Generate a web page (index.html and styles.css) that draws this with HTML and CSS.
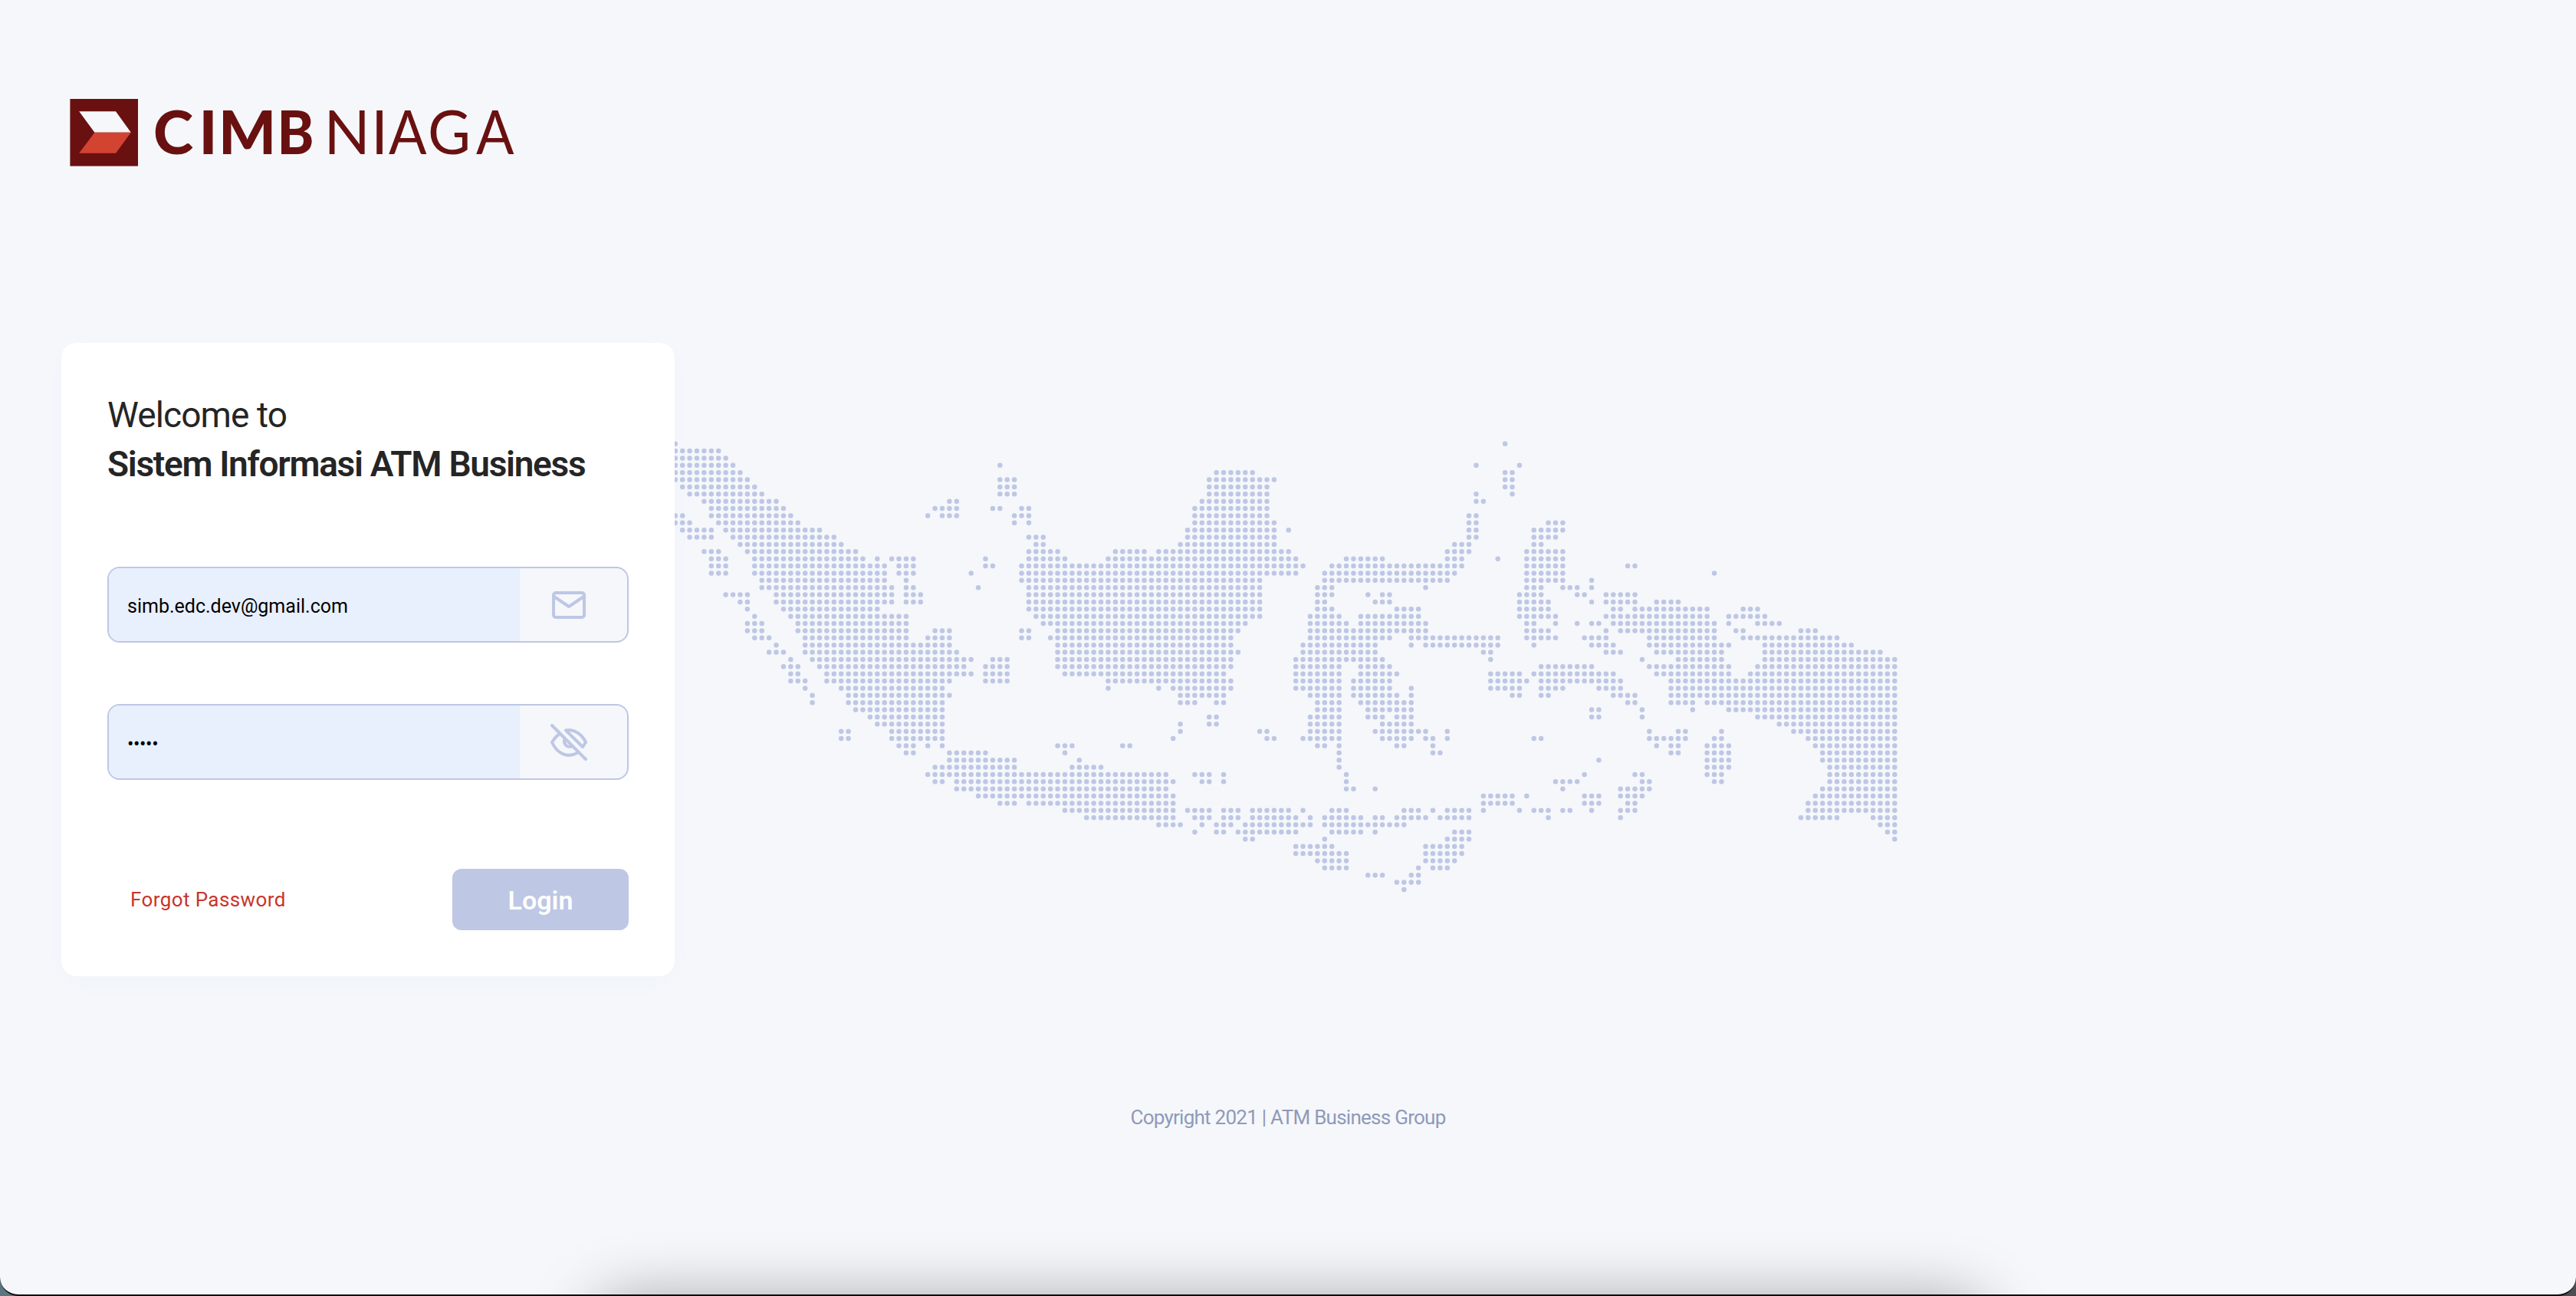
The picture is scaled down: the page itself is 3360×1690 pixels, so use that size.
FILE: index.html
```html
<!DOCTYPE html>
<html lang="en">
<head>
<meta charset="utf-8">
<title>Sistem Informasi ATM Business</title>
<link rel="stylesheet" href="styles.css">
</head>
<body>
<div class="page">
  <header class="header">
    <svg class="logo" viewBox="0 0 600 88" role="img" aria-label="CIMB Niaga">
      <rect class="logo-box" x="0.4" y="0" width="88.6" height="87.6"/>
      <path class="logo-top" d="M12.2 16.3H60L79.8 43.7H32.4Z"/>
      <path class="logo-bottom" d="M32.4 43.7H79.8L60 70.8H12.2Z"/>
      <text class="logo-bold" x="109 168.500 194" y="72.3">CIM</text>
      <text class="logo-bold" x="270.500" y="72.3" textLength="48" lengthAdjust="spacingAndGlyphs">B</text>
      <text class="logo-light" x="331.500 393" y="72.3">NI</text>
      <text class="logo-light" x="416" y="72.3" textLength="49.500" lengthAdjust="spacingAndGlyphs">A</text>
      <text class="logo-light" x="467" y="72.3" textLength="56" lengthAdjust="spacingAndGlyphs">G</text>
      <text class="logo-light" x="530" y="72.3" textLength="49.500" lengthAdjust="spacingAndGlyphs">A</text>
    </svg>
  </header>

  <main class="main">
    <form class="card">
      <h1 class="title"><span class="title-light">Welcome to</span><span class="title-bold">Sistem Informasi ATM Business</span></h1>
      <div class="field">
        <div class="field-value">simb.edc.dev@gmail.com</div>
        <div class="field-icon">
          <svg width="48" height="48" viewBox="0 0 48 48"><rect x="4" y="8" width="40" height="32" rx="3"/><path d="M4 12.5L24 26L44 12.5"/></svg>
        </div>
      </div>
      <div class="field">
        <div class="field-value field-secret">•••••</div>
        <div class="field-icon">
          <svg width="48" height="48" viewBox="0 0 48 48"><path d="M2 2L46 46"/><path d="M20 8.3C31 6.300 41.500 13.500 46 24L42 30Z"/><path d="M12 13C7.500 16 4 20.500 2 24C9 39.500 23 45 35.500 37.500"/><path d="M18.500 20C16.500 25 20.500 31 27.500 29.500"/></svg>
        </div>
      </div>
      <div class="actions">
        <a class="forgot">Forgot Password</a>
        <button class="login" type="button">Login</button>
      </div>
    </form>
    <svg class="map" viewBox="-0.08 -0.5 170 64" preserveAspectRatio="none" aria-hidden="true"><path id="dots"/></svg>
  </main>

  <footer class="footer">Copyright 2021 | ATM Business Group</footer>
  <div class="dock-shadow"></div>
</div>
<script src="map.js"></script>
</body>
</html>
```
FILE: map.js
```js
// Each line is one row of the dot grid: columns or column ranges that hold a dot.
const rows = `0 115
0-6
0-7
0-8 45 111 117
0-9 75-80 115-116
0-10 45-47 74-83 115-116
1-11 45-47 74-82 115-116
2-12 45-47 74-82 111 116
4-14 38-39 73-82 111-112
5-15 36-39 44-45 48-49 72-82
0-1 5-16 35 37-39 47-49 72-82 110-111
0-2 6-17 47 49 72-83 110-111 121-123
1-5 7-20 71-83 85 110-111 119-123
2-5 8-22 49-51 71-83 110-111 119-122
9-23 50-51 70-83 108-110 119-120
4-6 10-25 49-53 61-65 67-85 107-110 118-123
5-7 11-26 28 30-33 43 49-54 60-86 93-98 107-109 114 118-123
5-7 11-29 31-33 43-44 48-87 91-109 118-123 132-133
5-7 11-29 31-33 41 48-86 90-108 118-123 144
12-29 32 48-81 90-107 118-123 127
12-30 32-33 42 49-81 89-91 104 118-120 123-125 127
7-10 14-30 32-34 49-81 89-91 96 98-99 117-120 125-126 129-133
9-10 14-30 32-34 49-81 89-90 97-99 117-121 127 129-133 136-139
10 15-28 49-81 89-91 100-103 117-121 130-131 133-143 148-150
11 16-32 50-81 88-92 95-103 117-122 129-143 146-151
10-12 17-32 51-79 88-93 95-104 118-119 122 125 127-128 130-144 146 150-153
10-12 17-32 36-38 48-49 53-78 88-104 118-121 129 131-144 147-148 156-158
11-13 18-32 35-38 48-49 52-77 88-99 102-114 118-122 126-129 135-144 148-161
14 18-38 53-77 87-97 102 104-114 119 127-130 135-146 151-163
13-15 18-39 53-78 87-97 112-113 129-131 136-145 151-167
16 19-41 44-46 53-77 86-98 113 134 139-145 151-169
15-17 20-40 43-46 53-77 86-92 95-99 120-127 135-146 150-169
16-17 21-41 43-46 54-76 86-92 95-100 113-117 119-130 136-146 149-169
16-18 21-38 43-46 60-77 86-92 94-99 113-118 120-131 138-169
18 23-37 60 67 69-77 86-92 94-99 102 113-117 120-123 128-131 138-169
19 24-38 70-76 88-92 94-100 102 116-117 120-121 130-133 138-169
19 24-37 70-72 75-76 89-92 95-102 132-133 138-141 143-169
25-37 89-92 96-102 127-128 134 141 146-169
27-37 74-75 88-92 96-98 100-102 127-128 134 150-169
28-37 70 74-75 88-92 98-102 153-169
23-24 30-37 70 81-82 88-92 97-104 107 135 139-140 145 155-169
23-24 30-37 69 82-83 87-92 98-102 104-105 107 119-120 135-140 144-145 157-169
31-33 35 37 53-55 62-63 89-90 92 100-101 105 136 138-139 143-146 158-169
32-33 38-43 54 92 105-106 138-139 143-146 159-169
38-47 56 92 128 143-146 159-169
36-47 55-59 92 143-146 160-169
35-68 72-74 76 93 126 133-134 143-145 160-169
36-37 39-69 73-74 76 93 122-125 134-135 144-145 160-169
39-68 93-94 97 123 131-135 159-169
42-69 112-116 118 126-128 131-134 158-169
45-47 49-69 112-116 126-128 132-133 157-169
54-69 71-74 76-78 80-85 87 91-93 101-103 105 107-110 112 117 119-121 123-124 127 131-133 157-169
57-69 72-74 76-78 80-86 88 90-95 97-98 100-104 106-110 121 131 156-161 166-169
67-70 73 75-77 79-88 90-101 167-169
72 75-76 78-86 91-95 97 108-110 168-169
79-80 90 107-110 169
86-91 104-109
86-93 104-109
89-93 104-108
90-93 103 105-107
96-98 102-103
100-103
101`.split("\n");

let d = "";
rows.forEach((row, y) => row.split(" ").forEach(run => {
  const [a, b = a] = run.split("-").map(Number);
  d += `M${a} ${y}h${b - a + 0.3}`;
}));
document.getElementById("dots").setAttribute("d", d);
```
FILE: styles.css
```css
* { box-sizing: border-box; }

body {
  margin: 0;
  background: linear-gradient(90deg, #5c7680, #4b4e52);
  font-family: Roboto, "Liberation Sans", sans-serif;
  color: #252525;
}

.page {
  position: relative;
  display: flex;
  flex-direction: column;
  width: 3360px;
  height: 1690px;
  overflow: hidden;
  background: #f5f7fb;
  border-bottom: 2px solid #08090b;
  border-radius: 0 0 24px 24px;
}

.header { height: 447px; padding: 129px 0 0 91px; }
.logo { display: block; width: 600px; height: 88px; overflow: visible; }
.logo-box { fill: #691110; }
.logo-top { fill: #f5f7fb; }
.logo-bottom { fill: #d34332; }
.logo-bold, .logo-light { fill: #691110; font-family: Lato, sans-serif; font-size: 79px; }
.logo-bold { font-weight: 900; }
.logo-light { font-weight: 400; }

.main { display: flex; height: 826px; padding-left: 80px; }

.card {
  width: 800px;
  height: 826px;
  padding: 60px;
  background: #fff;
  border-radius: 20px;
  box-shadow: 0 10px 26px rgba(225, 238, 255, .2);
}

.title {
  display: flex;
  flex-direction: column;
  margin: 0 0 100px;
  font-size: 46px;
  line-height: 64px;
  height: 132px;
  padding-top: 2px;
  white-space: nowrap;
}
.title-light { font-weight: 400; letter-spacing: -.9px; }
.title-bold { font-weight: 600; letter-spacing: -1.3px; }

.field {
  display: flex;
  height: 99px;
  margin-bottom: 80px;
  overflow: hidden;
  background: #f5f7fb;
  border: 2px solid #bec7e4;
  border-radius: 16px;
}
.field-value {
  display: flex;
  align-items: center;
  width: 536px;
  padding: 4px 0 0 24px;
  background: #e8effd;
  color: #000;
  font-size: 25px;
}
.field-secret { padding-top: 6px; letter-spacing: -.4px; }
.field-icon { display: flex; flex: 1; align-items: center; padding-left: 40px; }
.field-icon svg { fill: none; stroke: #bec7e4; stroke-width: 4; stroke-linecap: round; stroke-linejoin: round; }

.actions { display: flex; align-items: center; justify-content: space-between; height: 80px; margin-top: 116px; }
.forgot { padding: 0 0 1px 30px; color: #c9342c; font-size: 26px; letter-spacing: .4px; }
.login {
  width: 230px;
  height: 80px;
  padding: 2px 0 0;
  border: 0;
  border-radius: 12px;
  background: #bec7e4;
  color: #fff;
  font: 600 34px Roboto, sans-serif;
}

.map { width: 1600px; height: 600px; margin-top: 127px; }
.map path { fill: none; stroke: #bec7e4; stroke-width: .69; stroke-linecap: round; stroke-dasharray: 0 1; }

.footer { padding-top: 167px; text-align: center; color: #8f9ab8; font-size: 26px; line-height: 34px; letter-spacing: -.74px; }

.dock-shadow {
  position: absolute;
  left: 780px;
  top: 1700px;
  width: 1805px;
  height: 100px;
  border-radius: 30px;
  box-shadow: 0 0 86px rgba(0, 0, 0, .4);
}
```
